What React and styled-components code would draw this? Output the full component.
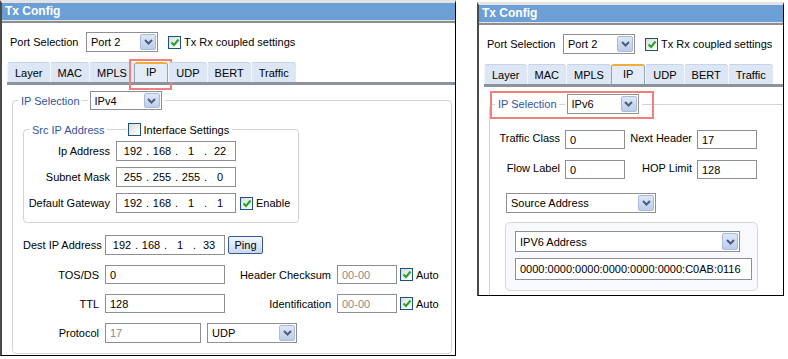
import React from "react";
import styled, { createGlobalStyle } from "styled-components";

const GlobalStyle = createGlobalStyle`
  body {
    margin: 0;
    background: #fff;
    font-family: "Liberation Sans", Arial, sans-serif;
    font-size: 11px;
    color: #000;
  }
`;

const Page = styled.div`
  display: flex;
  align-items: flex-start;
  gap: 21px;
  width: 788px;
  height: 359px;
`;

const Panel = styled.div`
  width: ${(p) => p.$w}px;
  height: ${(p) => p.$h}px;
  margin-top: ${(p) => p.$top || 0}px;
  box-sizing: border-box;
  border: 1px solid #000;
  border-top: 3px solid #e3e3e3;
  border-left: 2px solid #4a4a4a;
  display: flex;
  flex-direction: column;
  overflow: hidden;
  background: #fff;
`;

const TitleBar = styled.div`
  height: 17px;
  flex: none;
  background: #6c9fd6;
  color: #fff;
  font-weight: bold;
  font-size: 12px;
  line-height: 17px;
  padding-left: 3px;
  border-bottom: 1px solid #e4e4e4;
`;

const Body = styled.div`
  flex: 1;
  display: flex;
  flex-direction: column;
  border-top: 2px solid #8e8e8e;
  padding: 9px 3px 0 3px;
  min-height: 0;
`;

const TopRow = styled.div`
  display: flex;
  align-items: center;
  height: 20px;
  padding-left: 5px;
`;

const RowLabel = styled.span`
  width: 76px;
  white-space: nowrap;
`;

const SelectBox = styled.div`
  width: ${(p) => p.$w}px;
  height: ${(p) => p.$h || 20}px;
  box-sizing: border-box;
  border: 1px solid #8f8f8f;
  background: #fff;
  color: #000;
  display: flex;
  align-items: center;
  padding-left: 4px;
  flex: none;
  span {
    flex: 1;
    white-space: nowrap;
  }
`;

const DropButton = styled.div`
  width: 16px;
  align-self: stretch;
  margin: 1px;
  box-sizing: border-box;
  border: 1px solid #aabbd8;
  border-radius: 2px;
  background: linear-gradient(#dde7f7, #bccdeb);
  display: flex;
  align-items: center;
  justify-content: center;
`;

const CheckWrap = styled.label`
  display: inline-flex;
  align-items: center;
  gap: 3px;
  margin-left: ${(p) => p.$ml || 0}px;
  white-space: nowrap;
  color: #000;
  background: #fff;
`;

const Box = styled.span`
  width: 13px;
  height: 13px;
  box-sizing: border-box;
  border: 1px solid #1c5180;
  background: linear-gradient(135deg, #dcdcd6, #fff);
  display: inline-flex;
  align-items: center;
  justify-content: center;
  flex: none;
`;

const TabStrip = styled.div`
  display: flex;
  margin: 10px -3px 0 2px;
  border-bottom: 3px solid #8b939c;
  flex: none;
`;

const Tab = styled.div`
  position: relative;
  height: 20px;
  box-sizing: border-box;
  padding: 0 ${(p) => (p.$active ? 11 : 7)}px;
  display: flex;
  align-items: center;
  justify-content: center;
  background: ${(p) => (p.$active ? "#e4ecf8" : "#dce6f4")};
  border-top: ${(p) => (p.$active ? "2px solid #f0ad3c" : "1px solid #c6d3e9")};
  border-left: 1px solid ${(p) => (p.$active ? "#9aa3ad" : "#f3f6fb")};
  border-right: ${(p) => (p.$active ? "1px solid #9aa3ad" : "none")};
  border-radius: 3px 3px 0 0;
  padding-bottom: ${(p) => (p.$active ? 3 : 0)}px;
`;

const Highlight = styled.span`
  position: absolute;
  top: ${(p) => p.$t}px;
  left: ${(p) => p.$l}px;
  right: ${(p) => p.$r}px;
  bottom: ${(p) => p.$b}px;
  border: 2px solid #f07f7f;
  pointer-events: none;
`;

const Group = styled.fieldset`
  margin: ${(p) => p.$m};
  padding: 0 0 0 ${(p) => p.$pl || 0}px;
  border: 1px solid #d3d3d3;
  border-radius: 4px;
  min-width: 0;
  flex: ${(p) => (p.$grow ? 1 : "none")};
  width: ${(p) => (p.$w ? `${p.$w}px` : "auto")};
  box-sizing: border-box;
`;

const Legend = styled.legend`
  position: relative;
  display: flex;
  align-items: center;
  margin-left: ${(p) => (p.$ml !== undefined ? p.$ml : 5)}px;
  padding: 0 3px;
  color: #2f55a2;
`;

const Dash = styled.span`
  width: ${(p) => p.$w}px;
  height: 1px;
  background: #d3d3d3;
  margin: 0 2px;
`;

const SrcGrid = styled.div`
  display: grid;
  grid-template-columns: 86px 120px auto;
  column-gap: 6px;
  row-gap: 6px;
  align-items: center;
  padding: 5px 0 9px 0;
`;

const Label = styled.span`
  width: ${(p) => (p.$w ? `${p.$w}px` : "auto")};
  text-align: right;
  white-space: nowrap;
  flex: none;
`;

const Field = styled.div`
  width: ${(p) => p.$w}px;
  height: ${(p) => p.$h || 19}px;
  box-sizing: border-box;
  border: 1px solid #8f8f8f;
  background: #fff;
  display: flex;
  align-items: center;
  padding-left: 4px;
  color: ${(p) => (p.$disabled ? "#8a8a8a" : "#000")};
  flex: none;
  white-space: nowrap;
`;

const IpField = styled.div`
  width: 120px;
  height: 20px;
  box-sizing: border-box;
  border: 1px solid #8f8f8f;
  display: flex;
  align-items: center;
  padding-left: 4px;
  span {
    width: 24px;
    text-align: center;
  }
  i {
    font-style: normal;
    width: 5px;
    text-align: center;
  }
`;

const Lower = styled.div`
  display: flex;
  flex-direction: column;
  gap: 10px;
  margin-top: 12px;
`;

const Line = styled.div`
  display: flex;
  align-items: center;
  gap: ${(p) => p.$gap || 6}px;
`;

const PingButton = styled.button`
  width: 35px;
  height: 18px;
  margin-left: -3px;
  padding: 0;
  font: inherit;
  border: 1px solid #36598f;
  border-radius: 2px;
  background: linear-gradient(#f1f5fc, #c9d8ef);
`;

const V6Grid = styled.div`
  display: grid;
  grid-template-columns: 70px 60px 62px 60px;
  column-gap: 5px;
  row-gap: 11px;
  align-items: center;
  margin-top: 16px;
  span {
    text-align: right;
    white-space: nowrap;
    margin-top: -3px;
  }
`;

const Inner = styled.div`
  display: flex;
  flex-direction: column;
  margin: 14px 0 0 16px;
`;

const AddrBox = styled.div`
  width: 253px;
  box-sizing: border-box;
  margin: 9px 0 0 -1px;
  padding: 8px 0 10px 9px;
  border: 1px solid #d8d8d8;
  border-radius: 5px;
  background: #f8f9fc;
  display: flex;
  flex-direction: column;
  gap: 6px;
`;

const Chevron = () => (
  <svg width="9" height="6" viewBox="0 0 9 6">
    <path d="M1 1 L4.5 4.5 L8 1" stroke="#4b5c7e" strokeWidth="2" fill="none" />
  </svg>
);

const Tick = () => (
  <svg width="10" height="9" viewBox="0 0 10 9">
    <path d="M1.5 4.5 L4 7 L8.5 1.5" stroke="#22a32a" strokeWidth="2" fill="none" />
  </svg>
);

function Select({ w, h, value }) {
  return (
    <SelectBox $w={w} $h={h}>
      <span>{value}</span>
      <DropButton>
        <Chevron />
      </DropButton>
    </SelectBox>
  );
}

function Check({ checked, label, ml }) {
  return (
    <CheckWrap $ml={ml}>
      <Box>{checked && <Tick />}</Box>
      {label}
    </CheckWrap>
  );
}

function Ip({ parts }) {
  return (
    <IpField>
      <span>{parts[0]}</span><i>.</i>
      <span>{parts[1]}</span><i>.</i>
      <span>{parts[2]}</span><i>.</i>
      <span>{parts[3]}</span>
    </IpField>
  );
}

const tabs = ["Layer", "MAC", "MPLS", "IP", "UDP", "BERT", "Traffic"];

function Header({ markTab }) {
  return (
    <>
      <TopRow>
        <RowLabel>Port Selection</RowLabel>
        <Select w={72} value="Port 2" />
        <Check checked label="Tx Rx coupled settings" ml={10} />
      </TopRow>
      <TabStrip>
        {tabs.map((t) => (
          <Tab key={t} $active={t === "IP"}>
            {t}
            {markTab && t === "IP" && <Highlight $t={-5} $l={-6} $r={-5} $b={-8} />}
          </Tab>
        ))}
      </TabStrip>
    </>
  );
}

export default function App() {
  return (
    <>
      <GlobalStyle />
      <Page>
        <Panel $w={456} $h={356}>
          <TitleBar>Tx Config</TitleBar>
          <Body>
            <Header markTab />
            <Group $m="6px 0 1px 7px" $pl={10} $grow>
              <Legend $ml={-5}>
                IP Selection
                <Dash $w={6} />
                <Select w={72} h={19} value="IPv4" />
              </Legend>
              <Group $m="13px 0 0 0" $w={276}>
                <Legend>
                  Src IP Address
                  <Dash $w={19} />
                  <Check label="Interface Settings" />
                </Legend>
                <SrcGrid>
                  <Label>Ip Address</Label>
                  <Ip parts={["192", "168", "1", "22"]} />
                  <span />
                  <Label>Subnet Mask</Label>
                  <Ip parts={["255", "255", "255", "0"]} />
                  <span />
                  <Label>Default Gateway</Label>
                  <Ip parts={["192", "168", "1", "1"]} />
                  <Check checked label="Enable" ml={-2} />
                </SrcGrid>
              </Group>
              <Lower>
                <Line>
                  <Label $w={76}>Dest IP Address</Label>
                  <Ip parts={["192", "168", "1", "33"]} />
                  <PingButton>Ping</PingButton>
                </Line>
                <Line>
                  <Label $w={76}>TOS/DS</Label>
                  <Field $w={120}>0</Field>
                  <Label $w={100}>Header Checksum</Label>
                  <Field $w={60} $disabled>00-00</Field>
                  <Check checked label="Auto" ml={-3} />
                </Line>
                <Line>
                  <Label $w={76}>TTL</Label>
                  <Field $w={120}>128</Field>
                  <Label $w={100}>Identification</Label>
                  <Field $w={60} $disabled>00-00</Field>
                  <Check checked label="Auto" ml={-3} />
                </Line>
                <Line>
                  <Label $w={76}>Protocol</Label>
                  <Field $w={96} $h={20} $disabled>17</Field>
                  <Select w={90} value="UDP" />
                </Line>
              </Lower>
            </Group>
          </Body>
        </Panel>

        <Panel $w={307} $h={294} $top={2}>
          <TitleBar>Tx Config</TitleBar>
          <Body>
            <Header />
            <Group $m="7px -20px -40px 7px" $grow>
              <Legend>
                IP Selection
                <Dash $w={6} />
                <Select w={72} value="IPv6" />
                <Highlight $t={-3} $l={-5} $r={-12} $b={-5} />
              </Legend>
              <V6Grid>
                <span>Traffic Class</span>
                <Field $w={60}>0</Field>
                <span>Next Header</span>
                <Field $w={60}>17</Field>
                <span>Flow Label</span>
                <Field $w={60}>0</Field>
                <span>HOP Limit</span>
                <Field $w={60}>128</Field>
              </V6Grid>
              <Inner>
                <Select w={150} value="Source Address" />
                <AddrBox>
                  <Select w={225} h={21} value="IPV6 Address" />
                  <Field $w={237} $h={22}>0000:0000:0000:0000:0000:0000:C0AB:0116</Field>
                </AddrBox>
              </Inner>
            </Group>
          </Body>
        </Panel>
      </Page>
    </>
  );
}
